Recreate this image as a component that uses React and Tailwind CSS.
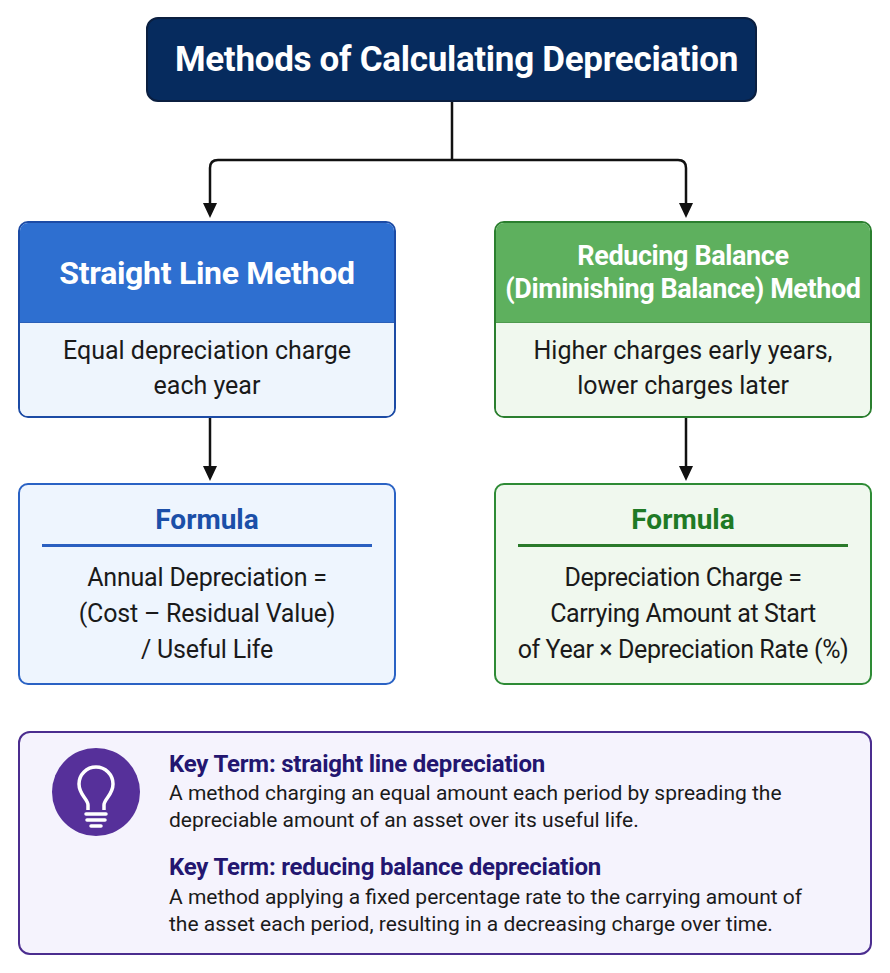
export default function App() {
  const font = { fontFamily: "Roboto, 'Liberation Sans', sans-serif" };

  return (
    <div className="w-[890px] h-[973px] bg-white px-[18px] pt-[17px]" style={font}>
      {/* Title */}
      <div className="ml-[128px] w-[611px] h-[85px] rounded-[12px] bg-[#062b5e] border-2 border-[#0b1f40] flex items-center justify-center">
        <h1 className="text-white font-bold text-[35px] tracking-[-0.3px] leading-none pl-[10px]">
          Methods of Calculating Depreciation
        </h1>
      </div>

      {/* Connector */}
      <svg width="854" height="119" viewBox="0 0 854 119" className="block">
        <path
          d="M434 0 V58 M192 104 V66 Q192 58 200 58 H660 Q668 58 668 66 V104"
          fill="none"
          stroke="#111"
          strokeWidth="2.5"
        />
        <polygon points="185,101 199,101 192,116" fill="#111" />
        <polygon points="661,101 675,101 668,116" fill="#111" />
      </svg>

      <div className="grid grid-cols-2 gap-[98px]">
        {/* Left column */}
        <div>
          <div className="h-[197px] rounded-[10px] border-2 border-[#1c4ba5] overflow-hidden flex flex-col">
            <div className="h-[100px] bg-[#2e6fd0] border-b border-[#2a5fb8] flex items-center justify-center">
              <h2 className="text-white font-bold text-[32px] tracking-[-0.3px]">Straight Line Method</h2>
            </div>
            <div className="flex-1 bg-[#eef5fd] flex items-center justify-center text-center text-[25px] leading-[35px] text-[#1a1a1a] pb-[4px]">
              <p>
                Equal depreciation charge
                <br />
                each year
              </p>
            </div>
          </div>
          <DownArrow />
          <div className="h-[202px] rounded-[10px] border-2 border-[#2a62c4] bg-[#eef5fe] pt-[19px]">
            <h3 className="text-center font-bold text-[28px] leading-[32px] text-[#1b4fa8]">Formula</h3>
            <div className="mx-[22px] mt-[8px] h-[3px] bg-[#2a5fc0]" />
            <p className="mt-[13px] text-center text-[25px] leading-[36px] tracking-[-0.2px] whitespace-nowrap text-[#1a1a1a]">
              Annual Depreciation =
              <br />
              (Cost – Residual Value)
              <br />/ Useful Life
            </p>
          </div>
        </div>

        {/* Right column */}
        <div>
          <div className="h-[197px] rounded-[10px] border-2 border-[#2b7f2f] overflow-hidden flex flex-col">
            <div className="h-[100px] bg-[#5eb05e] border-b border-[#4e9a4e] flex items-center justify-center">
              <h2 className="text-white font-bold text-[27px] leading-[33px] tracking-[-0.4px] text-center">
                Reducing Balance
                <br />
                (Diminishing Balance) Method
              </h2>
            </div>
            <div className="flex-1 bg-[#f0f8ee] flex items-center justify-center text-center text-[25px] leading-[35px] text-[#1a1a1a] pb-[4px]">
              <p>
                Higher charges early years,
                <br />
                lower charges later
              </p>
            </div>
          </div>
          <DownArrow />
          <div className="h-[202px] rounded-[10px] border-2 border-[#2e8b35] bg-[#f0f8ee] pt-[19px]">
            <h3 className="text-center font-bold text-[28px] leading-[32px] text-[#1f7a25]">Formula</h3>
            <div className="mx-[22px] mt-[8px] h-[3px] bg-[#2a7a2a]" />
            <p className="mt-[13px] text-center text-[25px] leading-[36px] tracking-[-0.4px] whitespace-nowrap text-[#1a1a1a]">
              Depreciation Charge =
              <br />
              Carrying Amount at Start
              <br />
              of Year × Depreciation Rate (%)
            </p>
          </div>
        </div>
      </div>

      {/* Key terms */}
      <div className="mt-[46px] h-[224px] rounded-[12px] border-2 border-[#4b2d8f] bg-[#f5f3fd] px-[32px] pt-[15px] flex gap-[29px]">
        <div className="shrink-0">
          <svg width="88" height="88" viewBox="0 0 88 88">
            <circle cx="44" cy="44" r="44" fill="#56309a" />
            <path
              d="M36 62 V57 C36 51 27 47 27 36 A17 17 0 1 1 61 36 C61 47 52 51 52 57 V62"
              fill="none"
              stroke="#fff"
              strokeWidth="3.5"
              strokeLinejoin="round"
            />
            <path
              d="M34 66 H54 M35 72 H53 M39 78 H49"
              fill="none"
              stroke="#fff"
              strokeWidth="3.5"
              strokeLinecap="round"
            />
          </svg>
        </div>
        <div className="text-[#1a1a1a]">
          <h4 className="font-bold text-[24px] leading-[32px] text-[#231670] tracking-[-0.2px]">
            Key Term: straight line depreciation
          </h4>
          <p className="text-[21px] leading-[27px]">
            A method charging an equal amount each period by spreading the
            <br />
            depreciable amount of an asset over its useful life.
          </p>
          <h4 className="mt-[17px] font-bold text-[24px] leading-[32px] text-[#231670] tracking-[-0.2px]">
            Key Term: reducing balance depreciation
          </h4>
          <p className="mt-[1px] text-[21px] leading-[27px]">
            A method applying a fixed percentage rate to the carrying amount of
            <br />
            the asset each period, resulting in a decreasing charge over time.
          </p>
        </div>
      </div>
    </div>
  );
}

function DownArrow() {
  return (
    <svg width="378" height="65" viewBox="0 0 378 65" className="block">
      <path d="M192 0 V50" fill="none" stroke="#111" strokeWidth="2.5" />
      <polygon points="185,48 199,48 192,63" fill="#111" />
    </svg>
  );
}
